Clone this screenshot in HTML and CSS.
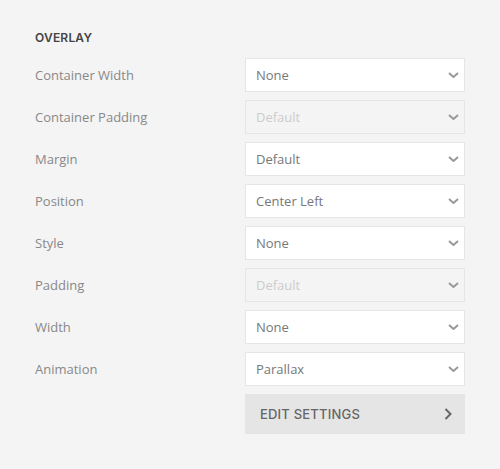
FILE: index.html
```html
<!DOCTYPE html>
<html>
<head>
<meta charset="utf-8">
<link rel="stylesheet" href="styles.css">
</head>
<body>
<div class="panel">
  <h3 class="heading">Overlay</h3>
  <div class="form">
    <label class="label">Container Width</label>
    <div class="select"><span>None</span><svg class="chev" viewBox="0 0 11 6"><path d="M1 1l4.5 4 4.5-4"/></svg></div>
    <label class="label">Container Padding</label>
    <div class="select disabled"><span>Default</span><svg class="chev" viewBox="0 0 11 6"><path d="M1 1l4.5 4 4.5-4"/></svg></div>
    <label class="label">Margin</label>
    <div class="select"><span>Default</span><svg class="chev" viewBox="0 0 11 6"><path d="M1 1l4.5 4 4.5-4"/></svg></div>
    <label class="label">Position</label>
    <div class="select"><span>Center Left</span><svg class="chev" viewBox="0 0 11 6"><path d="M1 1l4.5 4 4.5-4"/></svg></div>
    <label class="label">Style</label>
    <div class="select"><span>None</span><svg class="chev" viewBox="0 0 11 6"><path d="M1 1l4.5 4 4.5-4"/></svg></div>
    <label class="label">Padding</label>
    <div class="select disabled"><span>Default</span><svg class="chev" viewBox="0 0 11 6"><path d="M1 1l4.5 4 4.5-4"/></svg></div>
    <label class="label">Width</label>
    <div class="select"><span>None</span><svg class="chev" viewBox="0 0 11 6"><path d="M1 1l4.5 4 4.5-4"/></svg></div>
    <label class="label">Animation</label>
    <div class="select"><span>Parallax</span><svg class="chev" viewBox="0 0 11 6"><path d="M1 1l4.5 4 4.5-4"/></svg></div>
    <div class="spacer"></div>
    <div class="button"><span>Edit Settings</span><svg class="arrow" viewBox="0 0 8 12"><path d="M1.5 1l5 5-5 5"/></svg></div>
  </div>
</div>
</body>
</html>
```
FILE: styles.css
```css
html, body {
  margin: 0;
  background: #f4f4f4;
}
.panel {
  padding: 31px 35px 0 35px;
  font-family: "Open Sans", "Liberation Sans", sans-serif;
}
.heading {
  margin: 0 0 13px 0;
  font-family: "Inter", "Open Sans", sans-serif;
  font-weight: 600;
  font-size: 12px;
  line-height: 14px;
  letter-spacing: 0.2px;
  text-transform: uppercase;
  color: #444;
}
.form {
  display: grid;
  grid-template-columns: 210px 220px;
  row-gap: 8px;
  align-items: center;
}
.label {
  font-size: 13px;
  color: #888;
}
.select {
  height: 34px;
  box-sizing: border-box;
  border: 1px solid #e5e5e5;
  background: #fff;
  display: flex;
  align-items: center;
  justify-content: space-between;
  padding: 0 5px 0 10px;
  font-size: 13px;
  color: #777;
}
.select.disabled {
  background: #f4f4f4;
  color: #ccc;
}
.chev {
  width: 11px;
  height: 6px;
  fill: none;
  stroke: #999;
  stroke-width: 2;
}
.button {
  height: 40px;
  background: #e5e5e5;
  display: flex;
  align-items: center;
  justify-content: space-between;
  padding: 0 13px 0 15px;
  font-family: "Inter", "Open Sans", sans-serif;
  font-weight: 500;
  font-size: 13px;
  letter-spacing: 0.2px;
  text-transform: uppercase;
  color: #666;
}
.arrow {
  width: 8px;
  height: 12px;
  fill: none;
  stroke: #666;
  stroke-width: 2;
}
```
